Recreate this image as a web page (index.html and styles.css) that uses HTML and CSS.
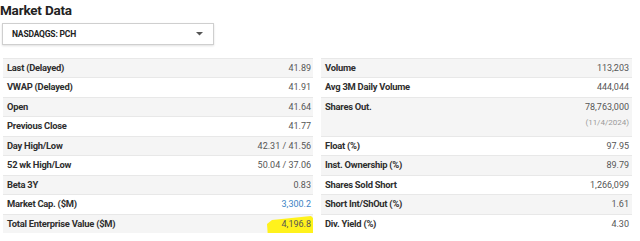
FILE: index.html
```html
<!DOCTYPE html>
<html>
<head>
<meta charset="utf-8">
<link rel="stylesheet" href="styles.css">
</head>
<body>
<div class="page">
  <h1 class="title">Market Data</h1>
  <div class="select">
    <span class="select-text">NASDAQGS: PCH</span>
    <svg class="caret" width="7" height="4" viewBox="0 0 7 4"><path d="M0 0H7L3.5 3.6Z" fill="#555"/></svg>
  </div>
  <div class="tables">
    <div class="table">
      <div class="row"><span class="label">Last (Delayed)</span><span class="value">41.89</span></div>
      <div class="row"><span class="label">VWAP (Delayed)</span><span class="value">41.91</span></div>
      <div class="row"><span class="label">Open</span><span class="value">41.64</span></div>
      <div class="row"><span class="label">Previous Close</span><span class="value">41.77</span></div>
      <div class="row"><span class="label">Day High/Low</span><span class="value">42.31 / 41.56</span></div>
      <div class="row"><span class="label">52 wk High/Low</span><span class="value">50.04 / 37.06</span></div>
      <div class="row"><span class="label">Beta 3Y</span><span class="value">0.83</span></div>
      <div class="row"><span class="label">Market Cap. ($M)</span><span class="value link">3,300.2</span></div>
      <div class="row"><span class="label">Total Enterprise Value ($M)</span><span class="value hl"><svg class="marker" width="48" height="26" viewBox="0 0 48 26"><path d="M1 9 L6 5 L45 1 L47 3 L47 18 L44 20 L6 25 L2 23 Z" fill="#fff21c"/></svg><span class="hl-text">4,196.8</span></span></div>
    </div>
    <div class="table">
      <div class="row"><span class="label">Volume</span><span class="value">113,203</span></div>
      <div class="row"><span class="label">Avg 3M Daily Volume</span><span class="value">444,044</span></div>
      <div class="row tall"><span class="label">Shares Out.</span><span class="value">78,763,000<span class="sub">(11/4/2024)</span></span></div>
      <div class="row"><span class="label">Float (%)</span><span class="value">97.95</span></div>
      <div class="row"><span class="label">Inst. Ownership (%)</span><span class="value">89.79</span></div>
      <div class="row"><span class="label">Shares Sold Short</span><span class="value">1,266,099</span></div>
      <div class="row"><span class="label">Short Int/ShOut (%)</span><span class="value">1.61</span></div>
      <div class="row"><span class="label">Div. Yield (%)</span><span class="value">4.30</span></div>
    </div>
  </div>
</div>
</body>
</html>
```

FILE: styles.css
```css
html, body {
  margin: 0;
  padding: 0;
  background: #fff;
}
.page {
  font-family: Roboto, "Liberation Sans", sans-serif;
  color: #333;
  width: 640px;
}
.title {
  margin: 0;
  padding-top: 2px;
  font-size: 13.5px;
  line-height: 16px;
  font-weight: 700;
  color: #222;
  letter-spacing: -0.2px;
}
.select {
  margin: 5px 0 0 2px;
  height: 20px;
  border: 1px solid #cfcfcf;
  box-shadow: 0 1px 2px rgba(0,0,0,0.12);
  display: flex;
  align-items: center;
  justify-content: space-between;
  padding: 0 10px 0 9px;
  box-sizing: content-box;
  width: 191px;
}
.select-text {
  font-size: 8.5px;
  font-weight: 700;
  color: #222;
  letter-spacing: -0.2px;
}
.caret {
  display: block;
}
.tables {
  display: grid;
  grid-template-columns: 310px 311px;
  column-gap: 8px;
  padding-left: 3px;
  margin-top: 13px;
}
.table {
  display: flex;
  flex-direction: column;
}
.row {
  display: flex;
  justify-content: space-between;
  align-items: flex-start;
  height: 18.45px;
  line-height: 18.45px;
  border-top: 1px solid #e8e8e8;
  padding: 0 2px 0 4px;
  font-size: 9px;
}
.table + .table .row {
  padding-right: 3px;
}
.row:nth-child(odd) {
  background: #f5f5f5;
}
.row.tall {
  height: 37.9px;
}
.label {
  font-size: 9.4px;
  font-weight: 700;
  color: #2e2e2e;
  letter-spacing: -0.25px;
}
.value {
  color: #555;
  text-align: right;
  display: flex;
  flex-direction: column;
  align-items: flex-end;
}
.link {
  color: #3b82c4;
}
.sub {
  font-size: 8px;
  color: #9a9a9a;
  line-height: 8px;
  margin-top: 3px;
}
.hl {
  position: relative;
}
.marker {
  position: absolute;
  right: -3px;
  top: 0;
}
.hl-text {
  position: relative;
}
```
